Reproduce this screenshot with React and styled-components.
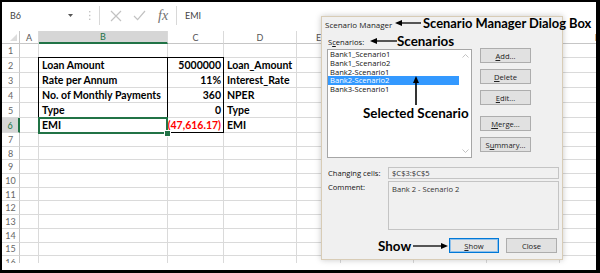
import React from "react";
import styled, { createGlobalStyle } from "styled-components";

const GlobalStyle = createGlobalStyle`
  html, body { margin: 0; padding: 0; background: #fff; }
  body { width: 600px; height: 273px; overflow: hidden; }
`;

const GREEN = "#217346";
const GRID = "#dadada";

const Frame = styled.div`
  position: relative;
  width: 600px;
  height: 273px;
  box-sizing: border-box;
  border-style: solid;
  border-color: #000;
  border-width: 2px 4px 3px 2px;
  background: #fff;
  overflow: hidden;
  font-family: Lato, "Open Sans", sans-serif;
`;

/* ---------- formula bar ---------- */

const FormulaBar = styled.div`
  display: flex;
  align-items: center;
  height: 27px;
  font-size: 9px;
  color: #444;
`;

const NameBox = styled.div`
  width: 78px;
  box-sizing: border-box;
  display: flex;
  align-items: center;
  justify-content: space-between;
  padding: 0 7px 0 8px;
`;

const Grip = styled.div`
  width: 19px;
  display: flex;
  justify-content: center;
`;

const Tools = styled.div`
  width: 78px;
  height: 19px;
  box-sizing: border-box;
  border-left: 1px solid #d8d8d8;
  border-right: 1px solid #d8d8d8;
  display: flex;
  align-items: center;
  justify-content: space-around;
  padding: 0 2px 0 4px;
`;

const Fx = styled.span`
  font-family: "Liberation Serif", serif;
  font-style: italic;
  font-size: 14px;
  color: #707070;
`;

const FormulaInput = styled.div`
  flex: 1;
  padding-left: 8px;
`;

/* ---------- sheet ---------- */

const Sheet = styled.div`
  margin-top: 2px;
  height: 232px;
  overflow: hidden;
  display: grid;
  grid-template-columns: 18px 19px 129px 56px 73px 44px repeat(4, 73px);
  grid-template-rows: 13px 14px repeat(5, 15px) repeat(10, 13.7px);
`;

const Cell = styled.div`
  grid-row: ${(p) => p.$r};
  grid-column: ${(p) => p.$c};
  box-sizing: border-box;
  border-right: 1px solid ${GRID};
  border-bottom: 1px solid ${GRID};
  padding: 0 2px 0 3px;
  font-size: 10.5px;
  font-weight: 700;
  color: ${(p) => p.$color || "#000"};
  white-space: nowrap;
  display: flex;
  align-items: center;
  justify-content: ${(p) => (p.$align === "right" ? "flex-end" : "flex-start")};
  overflow: visible;
`;

const ColHead = styled.div`
  grid-row: 1;
  grid-column: ${(p) => p.$c};
  box-sizing: border-box;
  background: ${(p) => (p.$active ? "#d6d6d6" : "#fff")};
  color: ${(p) => (p.$active ? GREEN : "#555")};
  border-right: 1px solid ${GRID};
  border-bottom: ${(p) => (p.$active ? `2px solid ${GREEN}` : `1px solid #c6c6c6`)};
  font-size: 9px;
  display: flex;
  align-items: center;
  justify-content: center;
`;

const RowHead = styled.div`
  grid-row: ${(p) => p.$r};
  grid-column: 1;
  box-sizing: border-box;
  background: ${(p) => (p.$active ? "#d6d6d6" : "#fff")};
  color: ${(p) => (p.$active ? GREEN : "#666")};
  border-right: ${(p) => (p.$active ? `2px solid ${GREEN}` : `1px solid #c6c6c6`)};
  border-bottom: 1px solid ${GRID};
  font-size: 9px;
  display: flex;
  align-items: center;
  justify-content: center;
`;

const Corner = styled.div`
  grid-row: 1;
  grid-column: 1;
  position: relative;
  border-right: 1px solid #c6c6c6;
  border-bottom: 1px solid #c6c6c6;
  &::after {
    content: "";
    position: absolute;
    right: 2px;
    bottom: 2px;
    border-style: solid;
    border-width: 0 0 7px 7px;
    border-color: transparent transparent #dcdcdc transparent;
  }
`;

const Outline = styled.div`
  grid-row: 3 / 8;
  grid-column: ${(p) => p.$cols};
  margin: -1px 0 0 -1px;
  border: 1px solid #000;
  border-width: ${(p) => p.$widths};
  z-index: 1;
  pointer-events: none;
`;

const Selection = styled.div`
  grid-row: 7;
  grid-column: 3;
  position: relative;
  margin: -1px 0 -1px -1px;
  border: 2px solid ${GREEN};
  z-index: 2;
  &::after {
    content: "";
    position: absolute;
    right: -5px;
    bottom: -5px;
    width: 5px;
    height: 5px;
    background: ${GREEN};
    border: 1px solid #fff;
  }
`;

/* ---------- dialog ---------- */

const Dialog = styled.div`
  position: absolute;
  left: 319px;
  top: 14px;
  width: 242px;
  height: 244px;
  box-sizing: border-box;
  background: #f0f0f0;
  border: 1px solid #d8ccb6;
  box-shadow: 0 0 6px rgba(0, 0, 0, 0.22);
  font-family: "Open Sans", "Noto Sans", sans-serif;
  font-size: 7.6px;
  color: #111;
  display: flex;
  flex-direction: column;
`;

const Title = styled.div`
  height: 15px;
  padding-left: 3px;
  display: flex;
  align-items: center;
  font-size: 8px;
  color: #222;
`;

const Body = styled.div`
  padding: 0 4px 0 5px;
  display: flex;
  flex-direction: column;
`;

const Label = styled.div`
  height: 17px;
  padding-top: 4px;
  box-sizing: border-box;
  line-height: 12px;
  padding-left: 1px;
`;

const ListRow = styled.div`
  display: flex;
  gap: 8px;
`;

const ListBox = styled.div`
  width: 145px;
  height: 109px;
  box-sizing: border-box;
  background: #fff;
  border: 1px solid #a6a6a6;
  display: flex;
`;

const Items = styled.div`
  flex: 1;
`;

const Item = styled.div`
  height: 8.8px;
  line-height: 8.8px;
  padding-left: 2px;
  white-space: nowrap;
  background: ${(p) => (p.$selected ? "#3399ff" : "transparent")};
  color: ${(p) => (p.$selected ? "#fff" : "#111")};
`;

const ScrollTrack = styled.div`
  width: 12px;
  display: flex;
  flex-direction: column;
  justify-content: space-between;
  align-items: center;
  padding: 4px 0;
`;

const ButtonColumn = styled.div`
  display: flex;
  flex-direction: column;
  gap: 6px;
  margin-top: -1px;
`;

const Button = styled.div`
  width: ${(p) => p.$w || 51}px;
  height: 15px;
  box-sizing: border-box;
  background: ${(p) => (p.$focus ? "#e5e5e5" : "#e1e1e1")};
  border: 1px solid ${(p) => (p.$focus ? "#0078d7" : "#adadad")};
  box-shadow: ${(p) => (p.$focus ? "inset 0 0 0 1px #8fc0ea" : "none")};
  display: flex;
  align-items: center;
  justify-content: center;
  margin-top: ${(p) => p.$gap || 0}px;
  color: #222;
  u {
    text-decoration-thickness: 0.6px;
  }
`;

const Fields = styled.div`
  margin-top: 9px;
  display: grid;
  grid-template-columns: 61px 171px;
  grid-template-rows: 12px 49px;
  row-gap: 2px;
`;

const FieldLabel = styled.div`
  padding-left: 1px;
  line-height: 12px;
`;

const Field = styled.div`
  box-sizing: border-box;
  border: 1px solid #c4c4c4;
  background: #f0f0f0;
  padding: 0 3px;
  line-height: ${(p) => (p.$tall ? "14px" : "10px")};
  color: #333;
`;

const Footer = styled.div`
  margin-top: 8px;
  display: flex;
  justify-content: flex-end;
  gap: 7px;
  padding-right: 1px;
`;

/* ---------- callouts ---------- */

const Callout = styled.div`
  position: absolute;
  left: ${(p) => p.$x}px;
  top: ${(p) => p.$y}px;
  display: flex;
  flex-direction: ${(p) => (p.$column ? "column" : "row")};
  align-items: center;
  gap: ${(p) => p.$gap || 0}px;
  font-family: Lato, "Open Sans", sans-serif;
  font-weight: 700;
  font-size: ${(p) => p.$size || 13.4}px;
  color: #000;
  white-space: nowrap;
  z-index: 5;
`;

const ArrowH = ({ len, right }) => (
  <svg width={len} height="8" viewBox={`0 0 ${len} 8`}>
    {right ? (
      <>
        <path d={`M0 4H${len - 4}`} stroke="#000" strokeWidth="1.3" />
        <path d={`M${len} 4L${len - 7} 1V7Z`} fill="#000" />
      </>
    ) : (
      <>
        <path d={`M4 4H${len}`} stroke="#000" strokeWidth="1.3" />
        <path d="M0 4L7 1V7Z" fill="#000" />
      </>
    )}
  </svg>
);

const ArrowUp = ({ len }) => (
  <svg width="8" height={len} viewBox={`0 0 8 ${len}`}>
    <path d={`M4 4V${len}`} stroke="#000" strokeWidth="1.6" />
    <path d="M4 0L1 7H7Z" fill="#000" />
  </svg>
);

const Chevron = ({ up }) => (
  <svg width="7" height="4" viewBox="0 0 7 4">
    <path d={up ? "M0.5 3.5L3.5 0.5L6.5 3.5" : "M0.5 0.5L3.5 3.5L6.5 0.5"} stroke="#b4b4b4" strokeWidth="0.8" fill="none" />
  </svg>
);

const cols = ["", "A", "B", "C", "D", "E", "F", "G", "H", "I"];

const data = {
  2: ["Loan Amount", "5000000", "Loan_Amount"],
  3: ["Rate per Annum", "11%", "Interest_Rate"],
  4: ["No. of Monthly Payments", "360", "NPER"],
  5: ["Type", "0", "Type"],
  6: ["EMI", "(47,616.17)", "EMI"],
};

const scenarios = [
  "Bank1_Scenario1",
  "Bank1_Scenario2",
  "Bank2-Scenario1",
  "Bank2-Scenario2",
  "Bank3-Scenario1",
];

function SheetGrid() {
  const cells = [<Corner key="corner" />];
  for (let c = 1; c < cols.length; c++) {
    cells.push(
      <ColHead key={`h${c}`} $c={c + 1} $active={c === 2}>
        {cols[c]}
      </ColHead>
    );
  }
  for (let r = 1; r <= 16; r++) {
    cells.push(
      <RowHead key={`r${r}`} $r={r + 1} $active={r === 6}>
        {r}
      </RowHead>
    );
    for (let c = 1; c < cols.length; c++) {
      const row = data[r];
      let text = null;
      if (row && c >= 2 && c <= 4) text = row[c - 2];
      cells.push(
        <Cell
          key={`${r}-${c}`}
          $r={r + 1}
          $c={c + 1}
          $align={c === 3 ? "right" : "left"}
          $color={r === 6 && c === 3 ? "#ff0000" : undefined}
        >
          {text}
        </Cell>
      );
    }
  }
  return (
    <Sheet>
      {cells}
      <Outline $cols="3 / 5" $widths="1px" />
      <Outline $cols="4 / 5" $widths="0 0 0 1px" />
      <Selection />
    </Sheet>
  );
}

export default function App() {
  return (
    <Frame>
      <GlobalStyle />
      <FormulaBar>
        <NameBox>
          <span>B6</span>
          <svg width="5" height="3" viewBox="0 0 5 3">
            <path d="M0 0H5L2.5 3Z" fill="#555" />
          </svg>
        </NameBox>
        <Grip>
          <svg width="2" height="9" viewBox="0 0 2 9">
            <rect x="0" y="0" width="1.4" height="1.4" fill="#c4c4c4" />
            <rect x="0" y="3.8" width="1.4" height="1.4" fill="#c4c4c4" />
            <rect x="0" y="7.6" width="1.4" height="1.4" fill="#c4c4c4" />
          </svg>
        </Grip>
        <Tools>
          <svg width="12" height="12" viewBox="0 0 12 12">
            <path d="M1 1L11 11M11 1L1 11" stroke="#c2c2c2" strokeWidth="1.2" />
          </svg>
          <svg width="13" height="11" viewBox="0 0 13 11">
            <path d="M1 6L4.6 9.6L12 1" stroke="#c2c2c2" strokeWidth="1.2" fill="none" />
          </svg>
          <Fx>fx</Fx>
        </Tools>
        <FormulaInput>EMI</FormulaInput>
      </FormulaBar>

      <SheetGrid />

      <Dialog>
        <Title>Scenario Manager</Title>
        <Body>
          <Label>
            S<u>c</u>enarios:
          </Label>
          <ListRow>
            <ListBox>
              <Items>
                {scenarios.map((s, i) => (
                  <Item key={s} $selected={i === 3}>
                    {s}
                  </Item>
                ))}
              </Items>
              <ScrollTrack>
                <Chevron up />
                <Chevron />
              </ScrollTrack>
            </ListBox>
            <ButtonColumn>
              <Button>
                <u>A</u>dd...
              </Button>
              <Button>
                <u>D</u>elete
              </Button>
              <Button>
                <u>E</u>dit...
              </Button>
              <Button $gap={5}>
                <u>M</u>erge...
              </Button>
              <Button>
                S<u>u</u>mmary...
              </Button>
            </ButtonColumn>
          </ListRow>
          <Fields>
            <FieldLabel>Changing cells:</FieldLabel>
            <Field>$C$3:$C$5</Field>
            <FieldLabel>Comment:</FieldLabel>
            <Field $tall>Bank 2 - Scenario 2</Field>
          </Fields>
          <Footer>
            <Button $w={50} $focus>
              <u>S</u>how
            </Button>
            <Button>Close</Button>
          </Footer>
        </Body>
      </Dialog>

      <Callout $x={393} $y={13} $gap={2} $size={12.9}>
        <ArrowH len={26} />
        <span>Scenario Manager Dialog Box</span>
      </Callout>
      <Callout $x={368} $y={31} $gap={0}>
        <ArrowH len={27} />
        <span>Scenarios</span>
      </Callout>
      <Callout $x={361} $y={74} $column>
        <ArrowUp len={29} />
        <span>Selected Scenario</span>
      </Callout>
      <Callout $x={376} $y={236} $gap={2}>
        <span>Show</span>
        <ArrowH len={35} right />
      </Callout>
    </Frame>
  );
}
